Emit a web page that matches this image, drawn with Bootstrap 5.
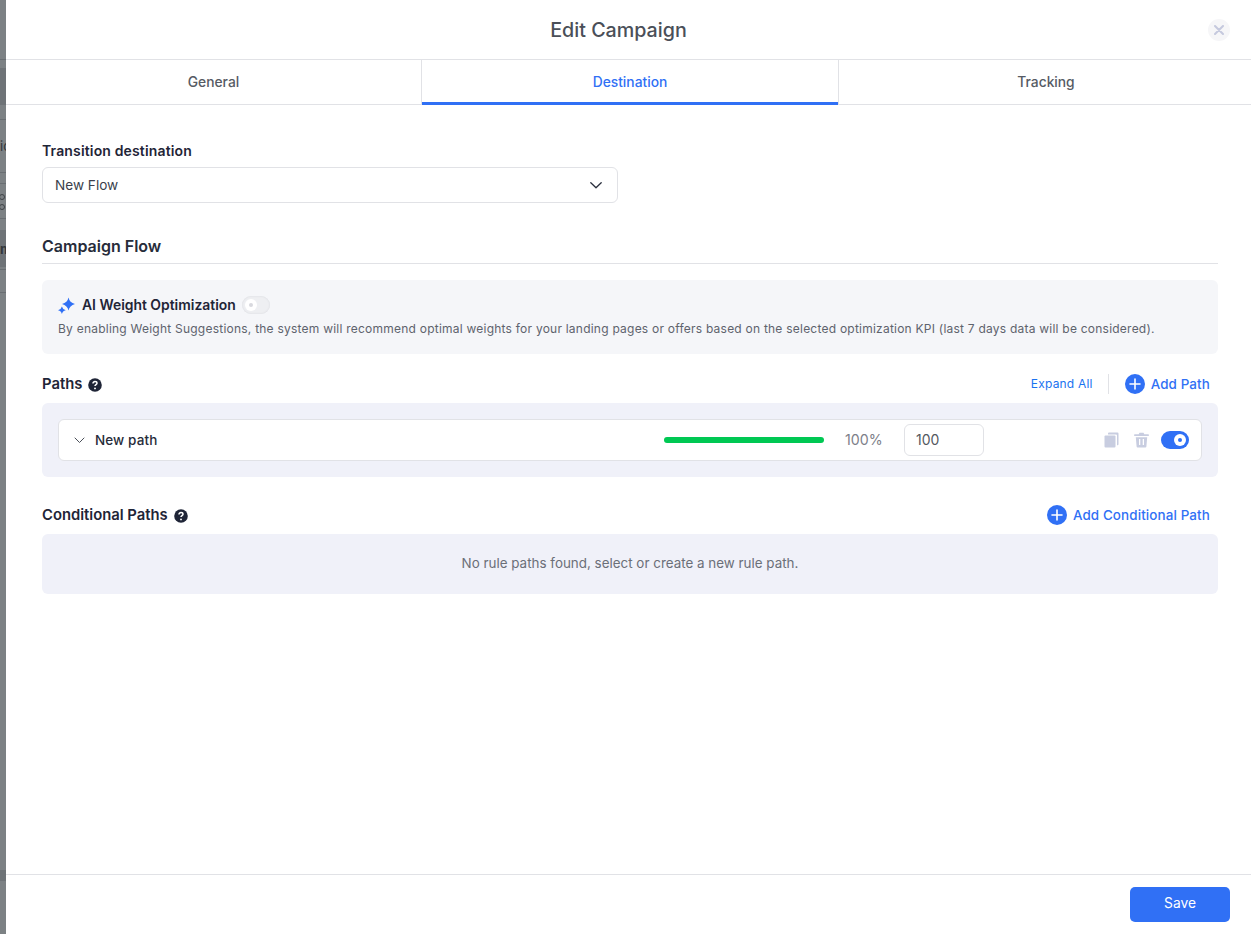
<!DOCTYPE html>
<html lang="en">
<head>
    <meta charset="UTF-8">
    <meta name="viewport" content="width=device-width, initial-scale=1.0">
    <title>Edit Campaign</title>
    <link href="https://cdn.jsdelivr.net/npm/bootstrap@5.3.3/dist/css/bootstrap.min.css" rel="stylesheet">
    <style>
        html, body { height: 100%; }
        body { font-family: "Inter", "Liberation Sans", sans-serif; color: #1f2537; background: #fff; overflow: hidden; }

        /* page behind the drawer, only a sliver is visible */
        .backdrop-strip { width: 6px; flex: none; background: #7c8184; overflow: hidden; color: #33373b; font-size: 13px; line-height: 16px; white-space: nowrap; }
        .strip-cell { display: flex; align-items: center; }
        .strip-line { border-bottom: 1px solid #696e72; }
        .strip-dark { background: #6e7377; }
        .strip-h3 { height: 3px; }
        .strip-h8 { height: 8px; }
        .strip-h11 { height: 11px; }
        .strip-h15 { height: 15px; }
        .strip-h23 { height: 23px; }
        .strip-h35 { height: 35px; flex-direction: column; align-items: flex-start; justify-content: center; gap: 4px; padding-top: 2px; }
        .strip-h37 { height: 37px; }
        .strip-h53 { height: 53px; }
        .strip-h60 { height: 60px; }
        .strip-h577 { height: 577px; }
        .strip-ring { width: 6px; height: 6px; margin-left: -1px; flex: none; border: 1px solid #3f4347; border-radius: 50%; }

        .drawer { flex: 1; min-width: 0; background: #fff; }
        .drawer-head { height: 60px; border-bottom: 1px solid #e1e2e6; position: relative; padding-right: 20px; }
        .drawer-title { font-size: 19.7px; font-weight: 500; color: #4a4f58; margin: 0; line-height: 60px; }
        .close-dot { position: absolute; top: 19px; right: 21px; width: 22px; height: 22px; border-radius: 50%; background: #f6f6f8; border: 0; padding: 0; display: flex; align-items: center; justify-content: center; }

        .tab-row { height: 45px; border-bottom: 1px solid #e1e2e6; }
        .tab-item { flex: 1 1 0; font-size: 13.8px; font-weight: 500; color: #565b64; text-decoration: none; display: flex; align-items: center; justify-content: center; position: relative; padding-top: 1px; }
        .tab-item.tab-first { flex: none; width: 415px; }
        .tab-item.tab-last { padding-left: 2px; }
        .tab-item.tab-on { color: #3070f5; border-left: 1px solid #e1e2e6; border-right: 1px solid #e1e2e6; flex: none; width: 418px; }
        .tab-item.tab-on::after { content: ""; position: absolute; left: 0; right: 0; bottom: -1px; height: 3px; background: #3070f5; }

        .drawer-body { padding: 37px 33px 0 36px; }
        .field-label { font-size: 14px; font-weight: 600; line-height: 17px; color: #1f2537; margin-bottom: 8px; display: block; letter-spacing: .15px; }
        .flow-select { width: 576px; height: 36px; font-size: 13.6px; color: #3a3f4c; border: 1px solid #e1e2e6; border-radius: 6px; padding: 0 15px 0 12px; display: flex; align-items: center; justify-content: space-between; background: #fff; }
        .section-title { font-size: 16px; font-weight: 600; line-height: 20px; color: #272c3a; margin: 33px 0 0; padding-bottom: 7px; border-bottom: 1px solid #e1e2e6; }

        .ai-box { background: #f5f6f9; border-radius: 6px; height: 74px; margin-top: 16px; padding: 15px 16px 0; }
        .ai-head { gap: 6px; }
        .ai-star { flex: none; margin-right: 1px; }
        .ai-title { font-size: 13.9px; font-weight: 600; line-height: 20px; color: #1f2537; }
        .ai-text { font-size: 12px; line-height: 16px; color: #5e636d; margin: 6px 0 0; letter-spacing: .23px; white-space: nowrap; }

        .toggle-off, .toggle-on { display: inline-block; width: 28px; height: 18px; border-radius: 9px; position: relative; flex: none; }
        .toggle-off { background: #eeeff2; box-shadow: inset 0 0 2px #d5d6db; }
        .toggle-off::after { content: ""; position: absolute; left: 3px; top: 3px; width: 12px; height: 12px; border-radius: 50%; background: #fff; }
        .toggle-off::before { content: ""; position: absolute; z-index: 1; left: 7px; top: 7px; width: 4px; height: 4px; border-radius: 50%; background: #d8d9de; }
        .toggle-on { background: #3070f5; }
        .toggle-on::after { content: ""; position: absolute; right: 3px; top: 3px; width: 12px; height: 12px; border-radius: 50%; background: #fff; }
        .toggle-on::before { content: ""; position: absolute; z-index: 1; right: 7px; top: 7px; width: 4px; height: 4px; border-radius: 50%; background: #3070f5; }

        .block-head { height: 20px; display: flex; align-items: center; justify-content: space-between; padding-right: 8px; }
        .paths-head { margin-top: 20px; }
        .cond-head { margin-top: 28px; }
        .block-label { font-size: 14.8px; font-weight: 600; color: #1f2537; display: flex; align-items: center; gap: 6px; padding-top: 1px; }
        .link-small { font-size: 12px; font-weight: 400; color: #1a73f0; text-decoration: none; letter-spacing: .2px; }
        .link-add { font-size: 13.4px; font-weight: 500; color: #3070f5; text-decoration: none; display: flex; align-items: center; gap: 6px; letter-spacing: .13px; }
        .link-add span { padding-top: 1px; }
        .head-sep { width: 1px; height: 20px; background: #e1e2e6; margin: 0 16px 0 15px; }

        .paths-panel { background: #f0f1f9; border-radius: 6px; padding: 16px; height: 74px; margin-top: 9px; }
        .path-row { height: 42px; background: #fff; border: 1px solid #e1e2e6; border-radius: 6px; display: flex; align-items: center; padding: 0 12px 0 15px; }
        .path-name { font-size: 13.5px; font-weight: 500; color: #272c3a; margin-left: 10px; letter-spacing: .1px; padding-top: 1px; }
        .bar-track { width: 160px; height: 6px; margin-left: auto; border-radius: 3px; background: #00c853; }
        .bar-pct { font-size: 14.2px; color: #7d8089; width: 80px; padding-left: 21px; }
        .weight-input { width: 80px; height: 32px; border: 1px solid #e1e2e6; border-radius: 6px; font-size: 14px; color: #55595f; padding: 0 11px 1px; display: flex; align-items: center; margin-right: 120px; }
        .icon-copy { margin-right: 15px; flex: none; }
        .icon-trash { margin-right: 12px; flex: none; }

        .empty-panel { background: #f0f1f9; border-radius: 6px; height: 60px; margin-top: 9px; padding-bottom: 2px; display: flex; align-items: center; justify-content: center; font-size: 13.42px; color: #6b6f78; }

        .drawer-foot { position: absolute; left: 6px; right: 0; bottom: 0; height: 60px; border-top: 1px solid #e1e2e6; background: #fff; padding: 12px 21px 0 0; display: flex; justify-content: flex-end; align-items: flex-start; }
        .btn-save { width: 100px; height: 35px; padding: 0 0 2px; border-radius: 5px; background: #3070f5; border: 0; color: #fff; font-size: 13.8px; font-weight: 400; }
        .btn-save:hover { background: #2a63dc; color: #fff; }
    </style>
</head>
<body>
    <div class="d-flex h-100 position-relative">
        <!-- sliver of the campaign table behind the drawer -->
        <div class="backdrop-strip" aria-hidden="true">
            <div class="strip-cell strip-h60 strip-line"></div>
            <div class="strip-cell strip-h8"></div>
            <div class="strip-cell strip-h37 strip-dark"></div>
            <div class="strip-cell strip-h15 strip-line"></div>
            <div class="strip-cell strip-h53 strip-line">ic</div>
            <div class="strip-cell strip-h11 strip-line"></div>
            <div class="strip-cell strip-h35 strip-line"><span class="strip-ring"></span><span class="strip-ring"></span></div>
            <div class="strip-cell strip-h11"></div>
            <div class="strip-cell strip-h37 strip-dark fw-bold">m</div>
            <div class="strip-cell strip-h3 strip-line"></div>
            <div class="strip-cell strip-h23 strip-line"></div>
            <div class="strip-cell strip-h577"></div>
            <div class="strip-cell strip-h11 strip-dark"></div>
        </div>

        <div class="drawer">
            <div class="drawer-head text-center">
                <h1 class="drawer-title">Edit Campaign</h1>
                <button type="button" class="close-dot" aria-label="Close">
                    <svg width="10" height="10" viewBox="0 0 10 10"><path d="M1 1l8 8M9 1l-8 8" stroke="#c5c9de" stroke-width="2" stroke-linecap="round"/></svg>
                </button>
            </div>

            <div class="tab-row d-flex">
                <a class="tab-item tab-first" href="#">General</a>
                <a class="tab-item tab-on" href="#">Destination</a>
                <a class="tab-item tab-last" href="#">Tracking</a>
            </div>

            <div class="drawer-body">
                <label class="field-label">Transition destination</label>
                <div class="flow-select">
                    <span>New Flow</span>
                    <svg width="12" height="7" viewBox="0 0 12 7"><path d="M.8.8L6 5.8 11.200.8" fill="none" stroke="#2a2f3d" stroke-width="1.300" stroke-linecap="round" stroke-linejoin="round"/></svg>
                </div>

                <h2 class="section-title">Campaign Flow</h2>

                <div class="ai-box">
                    <div class="d-flex align-items-center ai-head">
                        <svg width="17" height="17" viewBox="0 0 17 17" class="ai-star">
                            <path d="M10.500 0.500Q11.500 5.500 17 7 11.500 8.500 10.500 13.500 9.500 8.500 4 7 9.500 5.500 10.500 0.500z" fill="#3070f5"/>
                            <path d="M3.900 9.500Q4.500 12.200 7.800 13.200 4.500 14 3.900 17 3.300 14 0 13.200 3.300 12.200 3.900 9.500z" fill="#3070f5"/>
                        </svg>
                        <span class="ai-title">AI Weight Optimization</span>
                        <span class="toggle-off"></span>
                    </div>
                    <p class="ai-text">By enabling Weight Suggestions, the system will recommend optimal weights for your landing pages or offers based on the selected optimization KPI (last 7 days data will be considered).</p>
                </div>

                <div class="block-head paths-head">
                    <span class="block-label">Paths
                        <svg width="14" height="14" viewBox="0 0 14 14"><circle cx="7" cy="7" r="6.800" fill="#1f2537"/><path d="M5 5.400c0-1.100.9-1.800 2-1.800s2 .7 2 1.700c0 1.400-2 1.400-2 2.800" fill="none" stroke="#fff" stroke-width="1.500"/><circle cx="7" cy="10.400" r=".95" fill="#fff"/></svg>
                    </span>
                    <div class="d-flex align-items-center">
                        <a class="link-small" href="#">Expand All</a>
                        <span class="head-sep"></span>
                        <a class="link-add" href="#">
                            <svg width="20" height="20" viewBox="0 0 20 20"><circle cx="10" cy="10" r="10" fill="#3070f5"/><path d="M10 5v10M5 10h10" stroke="#fff" stroke-width="1.600" stroke-linecap="round"/></svg>
                            <span>Add Path</span>
                        </a>
                    </div>
                </div>
                <div class="paths-panel">
                    <div class="path-row">
                        <svg width="11" height="7" viewBox="0 0 11 7"><path d="M1 1l4.500 4.500L10 1" fill="none" stroke="#4a4f58" stroke-width="1" stroke-linecap="round" stroke-linejoin="round"/></svg>
                        <span class="path-name">New path</span>
                        <span class="bar-track"></span>
                        <span class="bar-pct">100%</span>
                        <span class="weight-input">100</span>
                        <svg width="15" height="16" viewBox="0 0 15 16" class="icon-copy">
                            <path d="M5 .5h8.500a1 1 0 0 1 1 1v10.700a1 1 0 0 1-1 1h-.5V3.500a1 1 0 0 0-1-1H4V1.500a1 1 0 0 1 1-1z" fill="#c8cde0"/>
                            <rect x=".5" y="3.500" width="11" height="12" rx="1" fill="#c8cde0"/>
                        </svg>
                        <svg width="15" height="16" viewBox="0 0 15 16" class="icon-trash">
                            <path d="M5.500.8h4l.8 1.500h3.900a.8.8 0 0 1 0 1.700H.8a.8.8 0 0 1 0-1.700h3.900z" fill="#c8cde0"/>
                            <path d="M1.800 5.200h11.400l-.8 9.300a1 1 0 0 1-1 .9H3.600a1 1 0 0 1-1-.9zM5 7v6h1.300V7zm3.700 0v6H10V7z" fill="#c8cde0" fill-rule="evenodd"/>
                        </svg>
                        <span class="toggle-on"></span>
                    </div>
                </div>

                <div class="block-head cond-head">
                    <span class="block-label">Conditional Paths
                        <svg width="14" height="14" viewBox="0 0 14 14"><circle cx="7" cy="7" r="6.800" fill="#1f2537"/><path d="M5 5.400c0-1.100.9-1.800 2-1.800s2 .7 2 1.700c0 1.400-2 1.400-2 2.800" fill="none" stroke="#fff" stroke-width="1.500"/><circle cx="7" cy="10.400" r=".95" fill="#fff"/></svg>
                    </span>
                    <a class="link-add" href="#">
                        <svg width="20" height="20" viewBox="0 0 20 20"><circle cx="10" cy="10" r="10" fill="#3070f5"/><path d="M10 5v10M5 10h10" stroke="#fff" stroke-width="1.600" stroke-linecap="round"/></svg>
                        <span>Add Conditional Path</span>
                    </a>
                </div>
                <div class="empty-panel">No rule paths found, select or create a new rule path.</div>
            </div>
        </div>

        <div class="drawer-foot">
            <button type="button" class="btn btn-save">Save</button>
        </div>
    </div>
    <script src="https://cdn.jsdelivr.net/npm/bootstrap@5.3.3/dist/js/bootstrap.bundle.min.js"></script>
</body>
</html>
